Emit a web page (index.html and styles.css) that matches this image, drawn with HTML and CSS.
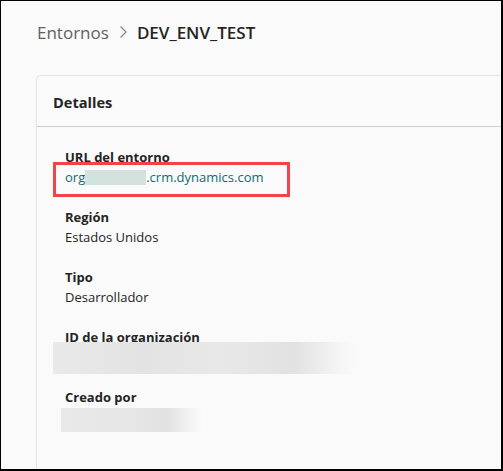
FILE: index.html
```html
<!DOCTYPE html>
<html lang="es">
<head>
<meta charset="utf-8">
<title>DEV_ENV_TEST</title>
<link rel="stylesheet" href="styles.css">
</head>
<body>
<div class="frame">
  <nav class="crumbs">
    <span class="crumb-link">Entornos</span>
    <svg class="chev" width="10" height="14" viewBox="0 0 10 14"><path d="M2.5 1.5 L8 7 L2.5 12.5" fill="none" stroke="#8a8a8a" stroke-width="1.3"/></svg>
    <span class="crumb-current">DEV_ENV_TEST</span>
  </nav>
  <section class="card">
    <header class="card-head">Detalles</header>
    <div class="card-body">
      <div class="field">
        <div class="label">URL del entorno</div>
        <div class="value url"><span>org</span><span class="blur-inline"></span><span>.crm.dynamics.com</span><span class="highlight"></span></div>
      </div>
      <div class="field">
        <div class="label">Región</div>
        <div class="value">Estados Unidos</div>
      </div>
      <div class="field">
        <div class="label">Tipo</div>
        <div class="value">Desarrollador</div>
      </div>
      <div class="field">
        <div class="label">ID de la organización</div>
        <div class="blur blur-id"></div>
      </div>
      <div class="field">
        <div class="label">Creado por</div>
        <div class="blur blur-user"></div>
      </div>
    </div>
  </section>
</div>
</body>
</html>
```
FILE: styles.css
```css
html, body {
  margin: 0;
  padding: 0;
}
body {
  width: 503px;
  height: 471px;
  overflow: hidden;
  background: #fafafa;
}
.frame {
  box-sizing: border-box;
  width: 503px;
  height: 471px;
  border-style: solid;
  border-color: #000;
  border-width: 1px 2px 2px 1px;
  overflow: hidden;
  font-family: "Open Sans", "Noto Sans", sans-serif;
  color: #242424;
  background: #fafafa;
}
.crumbs {
  display: flex;
  align-items: center;
  gap: 9px;
  height: 24px;
  margin: 19px 0 0 36px;
  font-size: 17px;
}
.crumb-link {
  color: #616161;
}
.chev {
  display: block;
}
.crumb-current {
  font-weight: 600;
  color: #242424;
}
.card {
  margin: 31px 0 0 35px;
  width: 600px;
  height: 500px;
  border: 1px solid #e6e6e6;
  border-radius: 5px;
  background: #fafafa;
  box-shadow: 0 0 2px rgba(0,0,0,0.06);
}
.card-head {
  height: 51px;
  box-sizing: border-box;
  padding: 16px 0 0 16px;
  font-size: 14.6px;
  font-weight: 700;
  line-height: 20px;
  border-bottom: 1px solid #cfcfcf;
}
.card-body {
  padding: 20px 0 0 28px;
  display: flex;
  flex-direction: column;
  gap: 20px;
}
.field {
  display: flex;
  flex-direction: column;
}
.label {
  font-size: 13px;
  font-weight: 700;
  line-height: 20px;
  color: #242424;
}
.value {
  font-size: 13px;
  line-height: 20px;
  color: #242424;
}
.url {
  position: relative;
  display: flex;
  align-items: center;
  color: #0f6c74;
}
.blur-inline {
  display: inline-block;
  width: 61px;
  height: 15px;
  background: #d4e2df;
}
.highlight {
  position: absolute;
  left: -12px;
  top: -5px;
  width: 231px;
  height: 29px;
  border: 3px solid #f2424a;
}
.blur {
  background: linear-gradient(90deg, #e9e9e9 0%, #e3e3e3 30%, #e8e8e8 55%, #e2e2e2 80%, rgba(240,240,240,0.4) 96%, rgba(250,250,250,0) 100%);
}
.blur-id {
  margin: -5px 0 -7px -12px;
  width: 302px;
  height: 32px;
}
.blur-user {
  margin: 1px 0 0 -4px;
  width: 142px;
  height: 24px;
  background: linear-gradient(90deg, #e9e9e9 0%, #e6e6e6 50%, #e2e2e2 75%, rgba(245,245,245,0.6) 95%, rgba(250,250,250,0.2) 100%);
}
```
